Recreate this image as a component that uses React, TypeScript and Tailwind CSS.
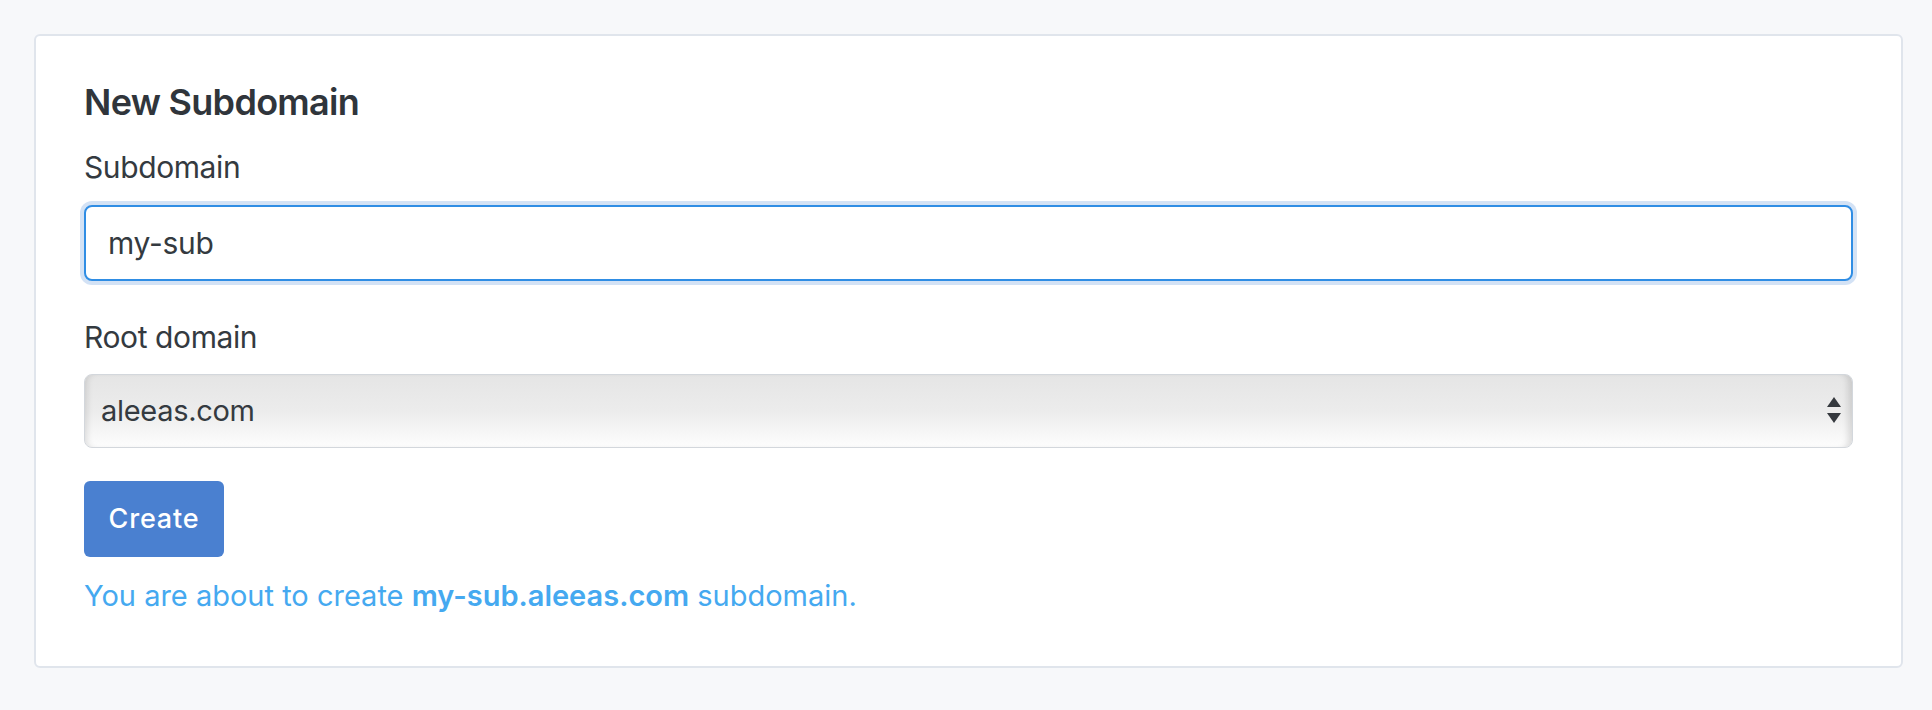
import { useState } from "react";

export default function App() {
  const [sub, setSub] = useState("my-sub");
  const [root, setRoot] = useState("aleeas.com");

  return (
    <div
      className="h-[710px] w-full bg-[#f7f8fa] pt-[34px] pl-[34px] pr-[29px]"
      style={{ fontFamily: "Inter, 'Noto Sans', sans-serif" }}
    >
      {/* Card */}
      <div className="rounded-[6px] border-2 border-[#e0e5ec] bg-white px-[48px] pt-[42px] pb-[49px]">
        <h5 className="text-[36px] leading-[48px] font-semibold text-[#30353b] tracking-[-0.7px]">
          New Subdomain
        </h5>

        <label className="mt-[17px] block text-[30px] leading-[48px] tracking-[-0.4px] text-[#343a40]">
          Subdomain
        </label>
        <input
          value={sub}
          onChange={(e) => setSub(e.target.value)}
          className="mt-[14px] block h-[76px] w-full rounded-[8px] border-2 border-[#2f8de4] bg-white px-[22px] text-[30px] tracking-[-0.3px] text-[#343a40] outline-none ring-4 ring-[#d3e2f5]"
        />

        <label className="mt-[32px] block text-[30px] leading-[48px] tracking-[-0.4px] text-[#343a40]">
          Root domain
        </label>
        <div className="relative mt-[13px]">
          <select
            value={root}
            onChange={(e) => setRoot(e.target.value)}
            className="block h-[74px] w-full appearance-none rounded-[8px] border border-[#d3d7dc] bg-gradient-to-b from-[#e5e5e5] via-[#ececec] to-[#fdfdfd] pl-[16px] text-[29px] tracking-[-0.3px] text-[#343a40] shadow-[inset_6px_0_6px_-4px_rgba(0,0,0,0.12),inset_-8px_0_6px_-4px_rgba(0,0,0,0.12)] outline-none"
          >
            <option>aleeas.com</option>
            <option>slmail.me</option>
          </select>
          <svg
            className="pointer-events-none absolute right-[12px] top-[23px]"
            width="14"
            height="27"
            viewBox="0 0 14 27"
          >
            <path d="M7 0 L14 10 L0 10 Z" fill="#35393e" />
            <path d="M0 16 L14 16 L7 26 Z" fill="#35393e" />
          </svg>
        </div>

        <button className="mt-[33px] block h-[76px] w-[140px] rounded-[6px] bg-[#4a80d0] text-[27px] font-medium tracking-[0.8px] text-white">
          Create
        </button>

        <p className="mt-[18px] text-[29px] leading-[42px] text-[#45a9f0]">
          You are about to create{" "}
          <span className="font-semibold">
            {sub}.{root}
          </span>{" "}
          subdomain.
        </p>
      </div>
    </div>
  );
}
